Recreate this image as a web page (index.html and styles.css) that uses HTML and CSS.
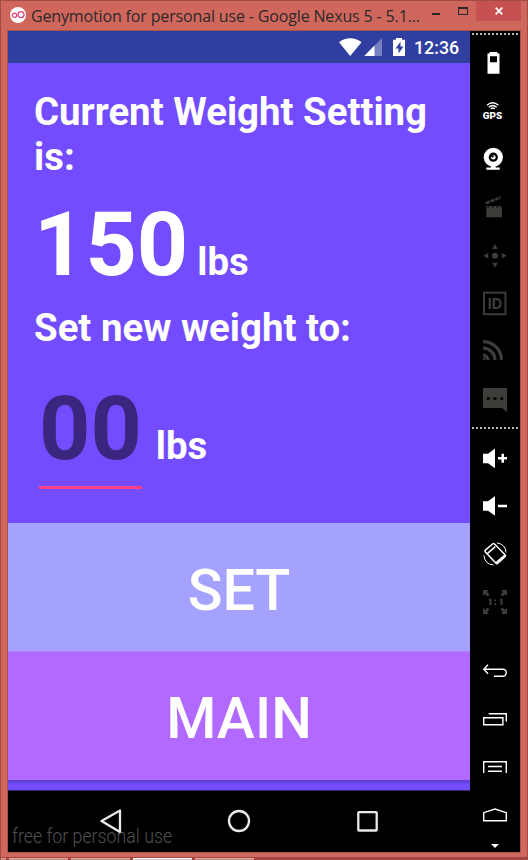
FILE: index.html
```
<!DOCTYPE html>
<html lang="en">
<head>
<meta charset="utf-8">
<title>Genymotion for personal use</title>
<link rel="stylesheet" href="styles.css">
</head>
<body>
<div class="window">
  <header class="titlebar">
    <svg class="logo" viewBox="0 0 16 16"><circle cx="8" cy="8" r="8" fill="#fff"/><g fill="none" stroke="#dc3c78" stroke-width="1.2"><circle cx="4.5" cy="8.3" r="2.2"/><circle cx="11" cy="7.7" r="3"/></g></svg>
    <span class="title">Genymotion for personal use - Google Nexus 5 - 5.1...</span>
    <div class="controls">
      <span class="min"></span><span class="max"></span>
      <span class="close"><svg viewBox="0 0 8 8"><path d="M.7.7l6.6 6.6M7.3.7L.7 7.3" stroke="#fff" stroke-width="1.7"/></svg></span>
    </div>
  </header>
  <div class="body">
    <main class="phone">
      <div class="status">
        <svg viewBox="0 0 68 20" class="signals">
          <path d="M0 4.2C6.5-1.2 16-1.2 22.5 4.2L11.2 18z" fill="#fff"/>
          <path d="M43 0V18H25.300z" fill="#7780c2"/><path d="M35.500 7.600V18H25.300z" fill="#fff"/>
          <path d="M54 1.700h3V0h6v1.700h3V18H54z" fill="#fff"/><path d="M61.500 3.700L56.500 10.500h3v5l5-7h-3z" fill="#303f9f"/>
        </svg>
        <span class="clock">12:36</span>
      </div>
      <section class="content">
        <h1 class="label">Current Weight Setting is:</h1>
        <div class="weight"><span class="number">150</span><span class="unit">lbs</span></div>
        <h2 class="label">Set new weight to:</h2>
        <div class="weight entry"><span class="number hint">00</span><span class="unit">lbs</span></div>
      </section>
      <div class="button set">SET</div>
      <div class="button main">MAIN</div>
      <div class="shadow"></div>
      <nav class="nav">
        <svg viewBox="0 0 462 61" fill="none" stroke="#e8eae8" stroke-width="2.300">
          <path d="M112 19.500V41L93.500 30z" stroke-linejoin="round"/><circle cx="231" cy="30" r="10"/><rect x="350.300" y="21.200" width="18.400" height="18.300" rx=".8"/>
        </svg>
        <span class="watermark">free for personal use</span>
      </nav>
    </main>
    <aside class="tools">
      <div class="dots"></div>
      <div class="group first">
        <svg viewBox="0 0 48 48"><path fill="#fff" fill-rule="evenodd" d="M18.500 13h8v1.500h2v20.200h-12V14.500h2zM19 17.300v6h7v-6z"/></svg>
        <svg viewBox="0 0 48 48"><g fill="none" stroke="#fff" stroke-width="1.400"><path d="M16 18.300q5.700-5.200 11.400 0M17.800 20.200q3.900-3.600 7.800 0M19.700 22q2-1.900 4 0"/></g><text x="11.800" y="31.800" class="gps" textLength="19.500" lengthAdjust="spacingAndGlyphs">GPS</text></svg>
        <svg viewBox="0 0 48 48"><circle cx="22.300" cy="22.300" r="9.600" fill="#fff"/><circle cx="22.300" cy="22.200" r="4.600" fill="#000"/><circle cx="22.300" cy="22.200" r="2.300" fill="#fff"/><circle cx="21.500" cy="21.300" r="1.200" fill="#000"/><path d="M20 31h4.600v1.400h4.100v2.300H15.300v-2.300H20z" fill="#fff"/></svg>
        <svg viewBox="0 0 48 48"><path fill="#3d3d39" d="M15.300 23H31v11.300H15.300zM14.200 19l15-5.800.9 2.300-15 6z"/><path stroke="#000" stroke-width="1" d="M18 23l-1.500 2M22.500 23l-1.500 2M27 23l-1.500 2M31.200 23l-1.500 2M18.500 17l1.500 3M23 15.200l1.500 3M27 13.500l1.500 3"/></svg>
        <svg viewBox="0 0 48 48" fill="#3d3d39"><circle cx="24" cy="24.700" r="3"/><path d="M24 13l2.800 5h-5.600zM24 36.700l2.800-5h-5.600zM12.300 24.700l4.900-2.800v5.600zM35.700 24.700l-4.900-2.800v5.600z"/></svg>
        <svg viewBox="0 0 48 48" fill="none" stroke="#3d3d39"><rect x="13" y="13.700" width="21.500" height="21.500" stroke-width="2"/><path stroke-width="2.200" d="M18.800 19v11M22.800 20h2.400q4.300 0 4.300 4.500t-4.300 4.500h-2.400z"/></svg>
        <svg viewBox="0 0 48 48" fill="none" stroke="#3d3d39" stroke-width="3.200"><path d="M12 14.600A18.400 18.400 0 0 1 30.400 33M12 21A12 12 0 0 1 24 33"/><path fill="#3d3d39" stroke="none" d="M12 26.500A6.500 6.500 0 0 1 18.500 33H16l-4-4z M12 30l3 3h-3z"/></svg>
        <svg viewBox="0 0 48 48"><path fill="#3d3d39" d="M12 13h24v24l-5-4H12z"/><g fill="#000"><circle cx="17.300" cy="23.600" r="1.700"/><circle cx="24" cy="23.600" r="1.700"/><circle cx="30.700" cy="23.600" r="1.700"/></g></svg>
      </div>
      <div class="dots"></div>
      <div class="group second">
        <svg viewBox="0 0 48 48"><path fill="#fff" d="M12 19.700h5l7-5.200v19.800l-7-5h-5zM30.500 19.800h2.500v3.300H36v2.400h-3v3.300h-2.500v-3.300H27v-2.400h3.500z"/></svg>
        <svg viewBox="0 0 48 48"><path fill="#fff" d="M12 19.200h5l7-5.200v19.800l-7-5h-5zM27 22.800h9v2.400h-9z"/></svg>
        <svg viewBox="0 0 48 48" fill="none" stroke="#fff"><path stroke-width="1.500" stroke-linejoin="round" d="M21.500 14l-7.100 6.100q-1 1 0 2l10.400 11q1 1 2 0l7.200-6.300q1-1 0-2L23.500 14q-1-1-2 0zM16.300 23.600l8-7M24.800 32.800l8.800-7.600"/><path stroke-width="1" d="M26 12.800Q34.500 14.300 35 22.500M13 25.500Q13.500 34 22.500 35"/></svg>
        <svg viewBox="0 0 48 48" fill="#3d3d39"><path d="M12 12h6l-2 2 2.500 2.500-2 2L14 16l-2 2zM36 12v6l-2-2-2.500 2.500-2-2L32 14l-2-2zM12 36v-6l2 2 2.500-2.500 2 2L16 34l2 2zM36 36h-6l2-2-2.500-2.500 2-2L34 32l2-2zM17 22l2.500-1.500h1V27h-2v-4.500zM23.300 21.500h1.800v1.700h-1.800zM23.300 25.200h1.800v1.700h-1.800zM28 22l2.500-1.500h1V27h-2v-4.500z"/></svg>
      </div>
      <div class="group third">
        <svg viewBox="0 0 48 48"><path d="M17 17.800l-4.200 4.500 4.200 4.400M12.800 22.300h19a3.500 3.500 0 0 1 0 7H23"/></svg>
        <svg viewBox="0 0 48 48"><path d="M12.700 22.700h19.200v7H12.700zM17.700 18.800h17.600v7.700"/></svg>
        <svg viewBox="0 0 48 48"><path d="M12.700 30V18.700h22.600V30M17 23.500h14M17 28.300h14"/></svg>
        <svg viewBox="0 0 48 48"><path d="M12.700 29.700v-8L24 18l11.300 3.700v8z"/></svg>
      </div>
      <svg class="more" viewBox="0 0 8 4"><path d="M0 0h8L4 4z" fill="#fff"/></svg>
    </aside>
  </div>
  <footer class="strip"><i></i><i></i><i></i><i class="active"></i><i></i></footer>
</div>
</body>
</html>
```
FILE: styles.css
```
* { box-sizing: border-box; }
body { margin: 0; font-family: Roboto, sans-serif; }
.window { width: 528px; height: 860px; overflow: hidden; background: #d0675d; border: solid #a44b47; border-width: 1px 1px 0; display: flex; flex-direction: column; }
.titlebar { height: 29px; display: flex; padding-left: 9px; flex: none; }
.logo { width: 16px; height: 16px; margin: 6px 5px 0 0; flex: none; }
.title { font: 16px/30px "Open Sans", sans-serif; color: #2d2929; width: 390px; white-space: nowrap; letter-spacing: -.15px; }
.controls { display: flex; margin-left: auto; padding-right: 6px; }
.min { width: 8px; height: 2px; background: #29272a; margin: 12px 18px 0 0; }
.max { width: 10px; height: 8px; border: 1px solid #29272a; border-top-width: 2px; margin: 6px 8px 0 0; }
.close { width: 45px; height: 20px; background: #c75050; display: flex; align-items: center; justify-content: center; }
.close svg { width: 8px; height: 8px; }
.body { display: flex; height: 823px; margin: 0 6px; border: 1px solid #a9524c; flex: none; background: #000; }
.phone { width: 462px; background: #000; }
.status { height: 32px; background: #303f9f; display: flex; justify-content: flex-end; padding-right: 11px; color: #fff; }
.signals { width: 68px; height: 20px; margin: 7px 7px 0 0; }
.clock { width: 45px; font-size: 17.800px; font-weight: 500; line-height: 34px; }
.content { height: 460px; background: #734cff; padding: 26px 26px 0; color: #fff; }
.label { margin: 0; font-size: 38.400px; font-weight: 700; line-height: 45px; }
.weight { display: flex; align-items: baseline; height: 126px; line-height: 132px; font-weight: 700; }
.number { font-size: 89.600px; }
.unit { font-size: 38.400px; margin-left: 9px; }
.entry { height: 116px; line-height: 111px; margin-top: 23px; padding-left: 5px; }
.hint { color: #3a267f; height: 116px; border-bottom: 3px solid #ff4081; }
.entry .unit { margin-left: 14px; }
.button { height: 128px; color: #fff; font-size: 57.400px; font-weight: 500; line-height: 135px; text-align: center; }
.set { background: #a5a2ff; }
.main { background: #b269ff; margin-top: 1px; box-shadow: 0 -1px #ad82ff; line-height: 133px; }
.shadow { height: 11px; background: linear-gradient(#613fd7 0 2px, #6944e8 3px, #734cff 4px); border-bottom: 1px solid #33256d; }
.nav { height: 61px; position: relative; }
.nav svg { width: 462px; height: 61px; display: block; }
.watermark { position: absolute; left: 4px; top: 33px; font-size: 20px; font-weight: 300; line-height: 24px; color: rgba(145,145,145,.58); white-space: nowrap; transform: scaleX(.888); transform-origin: left; }
.tools { width: 50px; padding-left: 1px; background: #000; }
.tools svg { display: block; width: 48px; height: 48px; }
.dots { height: 2px; margin: 2px 1px 0; width: 46px; background: repeating-linear-gradient(90deg, #bbb 0 2px, #000 2px 4px); }
.first { margin-top: 4px; }
.first + .dots { margin-top: 4px; }
.second { margin-top: 5px; }
.third { margin-top: 21px; }
.third path { fill: none; stroke: #fff; stroke-width: 1.400; }
.gps { font: 900 9px Roboto, sans-serif; fill: #fff; }
.tools .more { width: 8px; height: 4px; margin: 5px 0 0 20px; }
.strip { height: 3px; flex: none; margin: 4px -1px 0; border-top: 1px solid #a24641; background: #a24641; display: flex; gap: 3px; }
.strip i { width: 59px; height: 2px; background: #c88985; border-top: 1px solid #dfaaa6; }
.strip i:first-child { width: 6px; }
.strip .active { background: #e8c6c3; border-color: #fff; }
```
